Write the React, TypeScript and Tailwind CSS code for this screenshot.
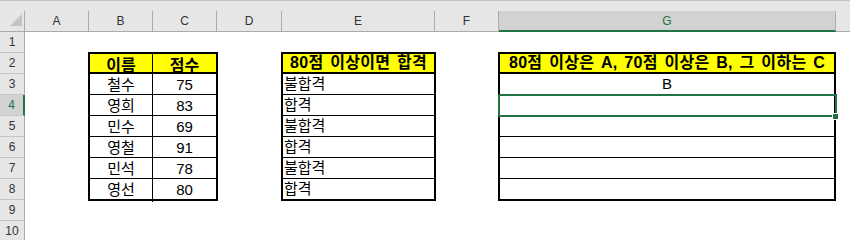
import React from 'react'

const rows = [
  { name: '철수', score: 75, pass: '불합격', grade: 'B' },
  { name: '영희', score: 83, pass: '합격', grade: '' },
  { name: '민수', score: 69, pass: '불합격', grade: '' },
  { name: '영철', score: 91, pass: '합격', grade: '' },
  { name: '민석', score: 78, pass: '불합격', grade: '' },
  { name: '영선', score: 80, pass: '합격', grade: '' },
]

const cols = ['A', 'B', 'C', 'D', 'E', 'F', 'G']

export default function App() {
  return (
    <div className="w-[850px] h-[240px] overflow-hidden bg-white font-['Liberation_Sans','Noto_Sans_CJK_KR',sans-serif] text-black">
      <div className="h-[11px] bg-[#e6e6e6] border-t border-[#c6c6c6]" />

      <div className="grid grid-cols-[25px_64px_64px_64px_65px_153px_64px_337px_1fr] grid-rows-[21px_repeat(10,21px)]">
        {/* corner */}
        <div className="relative bg-[#e6e6e6] border-r border-b border-[#ababab]">
          <svg className="absolute left-0 top-0" width="25" height="21">
            <polygon points="10,15 22,15 22,3" fill="#c3c3c3" />
          </svg>
        </div>

        {/* column headers */}
        {cols.map((c) =>
          c === 'G' ? (
            <div
              key={c}
              className="flex items-center justify-center bg-[#d2d2d2] border-b-2 border-[#217346] border-r border-r-[#ababab] text-[12px] text-[#217346]"
            >
              {c}
            </div>
          ) : (
            <div
              key={c}
              className="flex items-center justify-center bg-[#e6e6e6] border-r border-b border-[#ababab] text-[12px] text-[#333]"
            >
              {c}
            </div>
          )
        )}
        <div className="bg-[#e6e6e6] border-b border-[#ababab]" />

        {/* row headers */}
        {Array.from({ length: 10 }, (_, i) => i + 1).map((n) =>
          n === 4 ? (
            <div
              key={n}
              style={{ gridRowStart: n + 1 }}
              className="col-start-1 flex items-center justify-center bg-[#d2d2d2] border-r-2 border-[#217346] border-b border-b-[#c6c6c6] text-[12px] text-[#217346]"
            >
              {n}
            </div>
          ) : (
            <div
              key={n}
              style={{ gridRowStart: n + 1 }}
              className="col-start-1 flex items-center justify-center bg-[#e6e6e6] border-r border-[#ababab] border-b border-b-[#c6c6c6] text-[12px] text-[#333]"
            >
              {n}
            </div>
          )
        )}

        {/* 이름 / 점수 */}
        <div className="col-start-3 col-span-2 row-start-3 row-span-7 self-start -mx-px -mt-px border-2 border-black">
          <div className="grid grid-cols-[63px_1fr] h-[20px] bg-[#ffff00] border-b-2 border-black font-bold text-[16px]">
            <div className="flex items-center justify-center border-r border-black">이름</div>
            <div className="flex items-center justify-center">점수</div>
          </div>
          {rows.map((r, i) => (
            <div
              key={r.name}
              className={`grid grid-cols-[63px_1fr] text-[15px] ${i < rows.length - 1 ? 'h-[21px] border-b border-black' : 'h-[20px]'}`}
            >
              <div className="flex items-center justify-center border-r border-black">{r.name}</div>
              <div className="flex items-center justify-center">{r.score}</div>
            </div>
          ))}
        </div>

        {/* 합격 여부 */}
        <div className="col-start-6 row-start-3 row-span-7 self-start -mx-px -mt-px border-2 border-black">
          <div className="flex items-center justify-center h-[20px] bg-[#ffff00] border-b-2 border-black font-bold text-[16px] tracking-[0.3px] [word-spacing:2px]">
            80점 이상이면 합격
          </div>
          {rows.map((r, i) => (
            <div
              key={r.name}
              className={`flex items-center pl-px text-[15px] ${i < rows.length - 1 ? 'h-[21px] border-b border-black' : 'h-[20px]'}`}
            >
              {r.pass}
            </div>
          ))}
        </div>

        {/* 등급 */}
        <div className="col-start-8 row-start-3 row-span-7 self-start -ml-px -mt-px border-2 border-black">
          <div className="flex items-center justify-center h-[20px] bg-[#ffff00] border-b-2 border-black font-bold text-[16px] tracking-[0.3px] [word-spacing:2px]">
            80점 이상은 A, 70점 이상은 B, 그 이하는 C
          </div>
          {rows.map((r, i) => (
            <div
              key={r.name}
              className={`flex items-center justify-center text-[15px] ${i < rows.length - 1 ? 'h-[21px] border-b border-black' : 'h-[20px]'}`}
            >
              {r.grade}
            </div>
          ))}
        </div>

        {/* selected cell G4 */}
        <div className="relative z-10 col-start-8 row-start-5 -ml-px -mr-px -my-px border-2 border-[#217346]">
          <div className="absolute -right-[4px] -bottom-[5px] w-[7px] h-[7px] border border-white bg-[#217346]" />
        </div>
      </div>
    </div>
  )
}
